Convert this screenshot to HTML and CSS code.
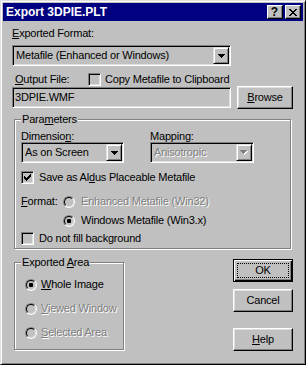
FILE: index.html
```html
<!DOCTYPE html>
<html>
<head>
<meta charset="utf-8">
<title>Export 3DPIE.PLT</title>
<link rel="stylesheet" href="styles.css">
</head>
<body>
<div class="window">
  <div class="titlebar">
    <span class="title">Export 3DPIE.PLT</span>
    <div class="tbtns">
      <span class="tbtn q">?</span>
      <span class="tbtn"><svg width="8" height="7" viewBox="0 0 8 7" shape-rendering="crispEdges"><g fill="#000"><rect x="0" y="0" width="2" height="1"/><rect x="6" y="0" width="2" height="1"/><rect x="1" y="1" width="2" height="1"/><rect x="5" y="1" width="2" height="1"/><rect x="2" y="2" width="4" height="1"/><rect x="3" y="3" width="2" height="1"/><rect x="2" y="4" width="4" height="1"/><rect x="1" y="5" width="2" height="1"/><rect x="5" y="5" width="2" height="1"/><rect x="0" y="6" width="2" height="1"/><rect x="6" y="6" width="2" height="1"/></g></svg></span>
    </div>
  </div>
  <div class="content">
    <div class="lbl-format"><u>E</u>xported Format:</div>
    <div class="combo c-format">
      <span class="combo-text">Metafile (Enhanced or Windows)</span>
      <span class="dd"><svg width="7" height="4" viewBox="0 0 7 4" shape-rendering="crispEdges"><g fill="#000"><rect x="0" y="0" width="7" height="1"/><rect x="1" y="1" width="5" height="1"/><rect x="2" y="2" width="3" height="1"/><rect x="3" y="3" width="1" height="1"/></g></svg></span>
    </div>
    <div class="row output-row">
      <span class="lbl-output"><u>O</u>utput File:</span>
      <span class="check"></span>
      <span>Copy Metafile to Clipboard</span>
    </div>
    <div class="file-row">
      <div class="field">3DPIE.WMF</div>
      <div class="btn browse"><u>B</u>rowse</div>
    </div>
    <div class="group params">
      <div class="legend">Para<u>m</u>eters</div>
      <div class="dims">
        <div class="col col-a">
          <div class="lbl-small">Dimensio<u>n</u>:</div>
          <div class="combo">
            <span class="combo-text">As on Screen</span>
            <span class="dd"><svg width="7" height="4" viewBox="0 0 7 4" shape-rendering="crispEdges"><g fill="#000"><rect x="0" y="0" width="7" height="1"/><rect x="1" y="1" width="5" height="1"/><rect x="2" y="2" width="3" height="1"/><rect x="3" y="3" width="1" height="1"/></g></svg></span>
          </div>
        </div>
        <div class="col col-b">
          <div class="lbl-small">Mapping:</div>
          <div class="combo">
            <span class="combo-text dis">Anisotropic</span>
            <span class="dd"><svg width="8" height="5" viewBox="0 0 8 5" shape-rendering="crispEdges"><g fill="#fff"><rect x="1" y="1" width="7" height="1"/><rect x="2" y="2" width="5" height="1"/><rect x="3" y="3" width="3" height="1"/><rect x="4" y="4" width="1" height="1"/></g><g fill="#808080"><rect x="0" y="0" width="7" height="1"/><rect x="1" y="1" width="5" height="1"/><rect x="2" y="2" width="3" height="1"/><rect x="3" y="3" width="1" height="1"/></g></svg></span>
          </div>
        </div>
      </div>
      <div class="row r-save">
        <span class="check"><svg width="7" height="7" viewBox="0 0 7 7" shape-rendering="crispEdges"><g fill="#000"><rect x="6" y="0" width="1" height="1"/><rect x="5" y="1" width="2" height="1"/><rect x="0" y="2" width="1" height="1"/><rect x="4" y="2" width="3" height="1"/><rect x="0" y="3" width="2" height="1"/><rect x="3" y="3" width="3" height="1"/><rect x="0" y="4" width="5" height="1"/><rect x="1" y="5" width="3" height="1"/><rect x="2" y="6" width="1" height="1"/></g></svg></span>
        <span>Save as Al<u>d</u>us Placeable Metafile</span>
      </div>
      <div class="row r-format">
        <span class="lbl-fmt"><u>F</u>ormat:</span>
        <span class="radio"><span class="radio-in"></span></span>
        <span class="dis">Enhanced Metafile (Win32)</span>
      </div>
      <div class="row r-win">
        <span class="radio"><span class="radio-in"><span class="dot"></span></span></span>
        <span>Windows Metafile (Win3.x)</span>
      </div>
      <div class="row r-fill">
        <span class="check"></span>
        <span>Do not fill background</span>
      </div>
    </div>
    <div class="bottom">
      <div class="group area">
        <div class="legend">Exported <u>A</u>rea</div>
        <div class="row a1">
          <span class="radio"><span class="radio-in"><span class="dot"></span></span></span>
          <span class="rtext"><u>W</u>hole Image</span>
        </div>
        <div class="row a2">
          <span class="radio"><span class="radio-in"></span></span>
          <span class="rtext dis"><u>V</u>iewed Window</span>
        </div>
        <div class="row a2">
          <span class="radio"><span class="radio-in"></span></span>
          <span class="rtext dis"><u>S</u>elected Area</span>
        </div>
      </div>
      <div class="buttons">
        <div class="btn default"><span class="focus">OK</span></div>
        <div class="btn cancel">Cancel</div>
        <div class="btn help"><span><u>H</u>elp</span></div>
      </div>
    </div>
  </div>
</div>
</body>
</html>
```
FILE: styles.css
```css
* { box-sizing: border-box; }
html, body { margin: 0; padding: 0; background: #c0c0c0; }
body {
  font-family: "Liberation Sans", Arial, sans-serif;
  font-size: 11px;
  line-height: 13px;
  color: #000;
  letter-spacing: -0.2px;
}
u { text-decoration: underline; text-underline-offset: 1px; }

.window {
  width: 306px;
  height: 365px;
  border: 1px solid;
  border-color: #dfdfdf #000 #000 #dfdfdf;
  box-shadow: inset 1px 1px #fff, inset -1px -1px #808080;
  padding: 2px;
  background: #c0c0c0;
}
.titlebar {
  height: 18px;
  background: #000080;
  display: flex;
  align-items: center;
  padding-left: 3px;
}
.title {
  flex: 1;
  color: #fff;
  font-weight: bold;
  font-size: 12px;
  letter-spacing: 0;
  line-height: 14px;
}
.tbtns { display: flex; gap: 2px; margin-right: 2px; }
.tbtn {
  width: 16px;
  height: 14px;
  background: #c0c0c0;
  border: 1px solid;
  border-color: #fff #000 #000 #fff;
  box-shadow: inset -1px -1px #808080;
  display: flex;
  align-items: center;
  justify-content: center;
}
.tbtn.q {
  font-weight: bold;
  font-size: 12px;
  line-height: 12px;
  letter-spacing: 0;
  padding-right: 1px;
}

.content { padding: 0 10px 0 9px; }
.lbl-format { margin-top: 6px; }

.combo {
  height: 21px;
  display: flex;
  align-items: center;
  border: 1px solid;
  border-color: #808080 #fff #fff #808080;
  box-shadow: inset 1px 1px #000, inset -1px -1px #dfdfdf;
  padding: 1px;
}
.combo-text { flex: 1; padding-left: 2px; white-space: nowrap; }
.dd {
  width: 16px;
  height: 17px;
  flex: none;
  border: 1px solid;
  border-color: #dfdfdf #000 #000 #dfdfdf;
  box-shadow: inset 1px 1px #fff, inset -1px -1px #808080;
  display: flex;
  align-items: center;
  justify-content: center;
}
.dd svg { display: block; }
.c-format { width: 219px; margin-top: 5px; }

.row { display: flex; align-items: center; height: 13px; white-space: nowrap; }
.output-row { margin-top: 7px; }
.lbl-output { width: 76px; padding-left: 3px; }

.check {
  width: 13px;
  height: 13px;
  flex: none;
  border: 1px solid;
  border-color: #808080 #fff #fff #808080;
  box-shadow: inset 1px 1px #000, inset -1px -1px #dfdfdf;
  display: flex;
  align-items: center;
  justify-content: center;
  margin-right: 4px;
}
.check svg { display: block; }

.file-row { display: flex; align-items: flex-start; }
.field {
  width: 219px;
  height: 21px;
  margin-top: 1px;
  border: 1px solid;
  border-color: #808080 #fff #fff #808080;
  box-shadow: inset 1px 1px #000, inset -1px -1px #dfdfdf;
  padding: 0 2px;
  line-height: 19px;
}

.btn {
  width: 60px;
  height: 23px;
  border: 1px solid;
  border-color: #fff #000 #000 #fff;
  box-shadow: inset -1px -1px #808080, inset 1px 1px #dfdfdf;
  display: flex;
  align-items: center;
  justify-content: center;
  line-height: 13px;
}
.browse { width: 56px; margin-left: 6px; }

.group {
  border: 1px solid #808080;
  box-shadow: inset 1px 1px #fff, 1px 1px #fff;
  margin-left: 2px;
}
.legend {
  display: table;
  margin-top: -7px;
  padding: 0 1px;
  background: #c0c0c0;
}
.params {
  width: 277px;
  height: 130px;
  margin-top: 10px;
  padding-left: 6px;
}
.dims { display: flex; gap: 26px; margin-top: 4px; }
.col-a { width: 103px; }
.col-b { width: 104px; }
.lbl-small { line-height: 12px; height: 12px; }

.r-save { margin-top: 8px; }
.r-save .check, .r-fill .check { margin-right: 5px; }
.r-format { margin-top: 11px; }
.lbl-fmt { width: 42px; }
.r-win { margin-top: 6px; padding-left: 42px; }
.r-fill { margin-top: 5px; }

.radio {
  width: 12px;
  height: 12px;
  flex: none;
  border-radius: 50%;
  border: 1px solid;
  border-color: #808080 #fff #fff #808080;
  margin-right: 6px;
}
.radio-in {
  width: 10px;
  height: 10px;
  border-radius: 50%;
  border: 1px solid;
  border-color: #000 #dfdfdf #dfdfdf #000;
  display: flex;
  align-items: center;
  justify-content: center;
}
.dot { width: 4px; height: 4px; border-radius: 1px; background: #000; }

.dis { color: #808080; text-shadow: 1px 1px 0 #fff; }

.bottom { display: flex; align-items: flex-start; margin-top: 10px; }
.area {
  width: 110px;
  height: 88px;
  margin-top: 3px;
  padding-left: 10px;
}
.area .legend { margin-left: -4px; }
.area .radio { margin-right: 4px; }
.a1 { margin-top: 9px; }
.a2 { margin-top: 11px; }

.buttons { margin-left: auto; display: flex; flex-direction: column; }
.btn.default {
  border-color: #000;
  box-shadow: inset 1px 1px #fff, inset -1px -1px #000, inset -2px -2px #808080;
}
.focus {
  width: 52px;
  height: 15px;
  border: 1px dotted #000;
  display: flex;
  align-items: center;
  justify-content: center;
}
.cancel { margin-top: 7px; }
.help { margin-top: 16px; }
```
